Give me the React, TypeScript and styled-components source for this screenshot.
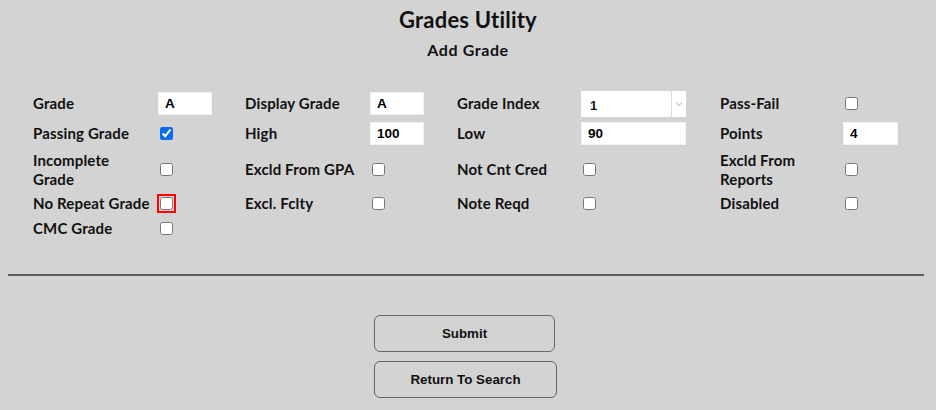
import React from "react";
import styled, { createGlobalStyle } from "styled-components";

const Global = createGlobalStyle`
  html, body { background: #d3d3d3; }
  body { margin: 8px; font-family: Lato, "Noto Sans", sans-serif; color: #111; }
`;

const Page = styled.div`
  display: flex;
  flex-direction: column;
  width: 920px;
`;

const Title = styled.h1`
  margin: 0;
  padding-top: 1px;
  text-align: center;
  font-size: 22px;
  line-height: 22px;
  font-weight: 700;
  letter-spacing: 0.2px;
`;

const Subtitle = styled.h2`
  margin: 10px 0 0;
  text-align: center;
  font-size: 16px;
  line-height: 18px;
  font-weight: 700;
  letter-spacing: 0.6px;
`;

const FormGrid = styled.div`
  display: grid;
  grid-template-columns: 125px 87px 125px 87px 124px 139px 123px 60px;
  grid-template-rows: 27px 25px 39px 21px 21px;
  row-gap: 4px;
  align-items: center;
  margin: 31px 0 0 25px;
`;

const Label = styled.span`
  font-size: 15px;
  line-height: 19px;
  font-weight: 700;
  letter-spacing: 0.15px;
`;

const Cell = styled.div`
  display: flex;
  align-items: center;
`;

const TextBox = styled.input<{ $w: number }>`
  box-sizing: border-box;
  width: ${(p) => p.$w}px;
  height: 23px;
  border: 1px solid #f2f2f2;
  background: #fff;
  padding: 0 0 0 6px;
  font-family: "Liberation Sans", Arial, sans-serif;
  font-size: 13.5px;
  font-weight: 700;
  color: #000;
  outline: none;
`;

const SelectWrap = styled.div`
  display: flex;
  width: 105px;
  height: 26px;
  background: #fff;
`;

const SelectValue = styled.div`
  flex: 1;
  display: flex;
  align-items: center;
  padding: 3px 0 0 9px;
  font-family: "Liberation Sans", Arial, sans-serif;
  font-size: 13px;
  font-weight: 700;
  border-right: 1px solid #dcdcdc;
`;

const Arrow = styled.div`
  width: 14px;
  display: flex;
  align-items: center;
  justify-content: center;
`;

const Check = styled.input.attrs({ type: "checkbox" })<{ $focus?: boolean }>`
  width: 13px;
  height: 13px;
  margin: 3px 3px 3px 2px;
  accent-color: #0b6cf0;
  ${(p) => (p.$focus ? "outline: 2px solid #ff0000; outline-offset: 1px;" : "")}
`;

const Rule = styled.hr`
  margin: 35px 4px 0 0;
  border: none;
  height: 2px;
  background: #5e5e5e;
`;

const Actions = styled.div`
  display: flex;
  flex-direction: column;
  align-items: flex-start;
  gap: 9px;
  margin: 39px 0 0 366px;
`;

const Button = styled.button<{ $w: number }>`
  width: ${(p) => p.$w}px;
  height: 37px;
  background: transparent;
  border: 1px solid #666;
  border-radius: 6px;
  font-family: "Liberation Sans", Arial, sans-serif;
  font-size: 13.33px;
  font-weight: 700;
  color: #111;
  padding: 0;
`;

const Chevron = () => (
  <svg width="8" height="6" viewBox="0 0 8 6">
    <path d="M1 1.5 L4 4.5 L7 1.5" fill="none" stroke="#aaa" strokeWidth="1" />
  </svg>
);

export default function App() {
  return (
    <Page>
      <Global />
      <Title>Grades Utility</Title>
      <Subtitle>Add Grade</Subtitle>
      <FormGrid>
        <Label>Grade</Label>
        <Cell><TextBox $w={54} defaultValue="A" /></Cell>
        <Label>Display Grade</Label>
        <Cell><TextBox $w={54} defaultValue="A" /></Cell>
        <Label>Grade Index</Label>
        <Cell>
          <SelectWrap>
            <SelectValue>1</SelectValue>
            <Arrow><Chevron /></Arrow>
          </SelectWrap>
        </Cell>
        <Label>Pass-Fail</Label>
        <Cell><Check /></Cell>

        <Label>Passing Grade</Label>
        <Cell><Check defaultChecked /></Cell>
        <Label>High</Label>
        <Cell><TextBox $w={54} defaultValue="100" /></Cell>
        <Label>Low</Label>
        <Cell><TextBox $w={105} defaultValue="90" /></Cell>
        <Label>Points</Label>
        <Cell><TextBox $w={55} defaultValue="4" /></Cell>

        <Label>Incomplete<br />Grade</Label>
        <Cell><Check /></Cell>
        <Label>Excld From GPA</Label>
        <Cell><Check /></Cell>
        <Label>Not Cnt Cred</Label>
        <Cell><Check /></Cell>
        <Label>Excld From<br />Reports</Label>
        <Cell><Check /></Cell>

        <Label>No Repeat Grade</Label>
        <Cell><Check $focus /></Cell>
        <Label>Excl. Fclty</Label>
        <Cell><Check /></Cell>
        <Label>Note Reqd</Label>
        <Cell><Check /></Cell>
        <Label>Disabled</Label>
        <Cell><Check /></Cell>

        <Label>CMC Grade</Label>
        <Cell><Check /></Cell>
      </FormGrid>
      <Rule />
      <Actions>
        <Button $w={181}>Submit</Button>
        <Button $w={183}>Return To Search</Button>
      </Actions>
    </Page>
  );
}
